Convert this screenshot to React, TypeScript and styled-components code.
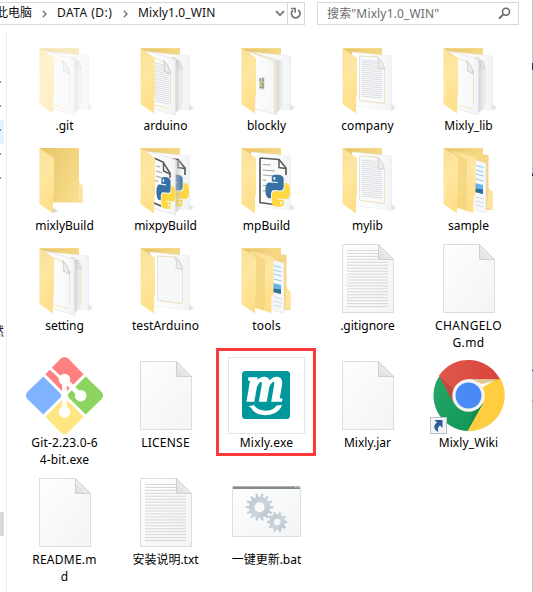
import React from "react";
import styled, { createGlobalStyle } from "styled-components";

const GlobalStyle = createGlobalStyle`
  html, body { margin: 0; padding: 0; background: #fff; overflow: hidden; }
  * { box-sizing: border-box; }
`;

const Window = styled.div`
  width: 533px;
  height: 592px;
  display: grid;
  grid-template-columns: 532px 1px;
  overflow: hidden;
  background: #fff;
  color: #111;
  font-family: "Noto Sans", "Noto Sans CJK SC", sans-serif;
  font-size: 12px;
`;
const Explorer = styled.div`
  display: flex;
  flex-direction: column;
  min-width: 0;
`;
const WindowEdge = styled.div`
  background: linear-gradient(
    #c3c3c3 63px, #15356b 63px 70px, #c3c3c3 70px 172px, #5ea3b5 172px 174px,
    #2a1522 174px 176px, #c3c3c3 176px 370px, #333 370px 371px, #c3c3c3 371px 373px,
    #b5dcd9 373px 379px, #c3c3c3 379px 400px, #b98a4c 400px 401px, #c3c3c3 401px
  );
`;

const Toolbar = styled.header`
  height: 32px;
  flex: none;
  display: flex;
  align-items: flex-start;
  gap: 12px;
  padding-top: 2px;
`;
const AddressBar = styled.nav`
  width: 305px;
  height: 23px;
  display: flex;
  border: 1px solid #d9d9d9;
  border-left: 0;
`;
const Crumbs = styled.div`
  flex: 1;
  display: flex;
  align-items: center;
  margin-left: -4px;
`;
const Crumb = styled.span<{ $width: number; $spacing?: number }>`
  width: ${(p) => p.$width}px;
  line-height: 20px;
  margin-top: -1px;
  flex: none;
  white-space: nowrap;
  letter-spacing: ${(p) => p.$spacing ?? 0}px;
`;
const Separator = styled.svg`
  width: 5px;
  height: 8px;
  margin: 1px 10px 0;
  flex: none;
  overflow: visible;
`;
const BarButton = styled.button<{ $width: number; $divided?: boolean }>`
  width: ${(p) => p.$width}px;
  padding: 0;
  border: 0;
  border-left: ${(p) => (p.$divided ? "1px solid #d9d9d9" : "0")};
  background: none;
  display: flex;
  align-items: center;
  justify-content: center;
`;
const SearchBox = styled.div`
  width: 202px;
  height: 23px;
  display: flex;
  align-items: center;
  justify-content: space-between;
  padding: 0 7px 0 9px;
  border: 1px solid #d9d9d9;
  color: #6d6d6d;
  line-height: 20px;
  letter-spacing: 0.15px;
`;

const Body = styled.div`
  flex: 1;
  display: flex;
  min-height: 0;
`;
const TreePane = styled.aside`
  width: 7px;
  flex: none;
  display: flex;
  flex-direction: column;
  border-right: 1px solid #ececec;
  padding-top: 40px;
`;
const TreeRow = styled.div<{ $selected?: boolean }>`
  width: 4px;
  height: 24px;
  display: flex;
  align-items: center;
  padding-bottom: 4px;
  background: ${(p) => (p.$selected ? "#e5f3ff" : "transparent")};
  &::before {
    content: "";
    width: 1px;
    height: 2px;
    background: #8b8b8b;
  }
`;
const TreeText = styled.div`
  width: 4px;
  height: 18px;
  margin-top: 130px;
  overflow: hidden;
  display: flex;
  justify-content: flex-end;
  color: #45143b;
  line-height: 18px;
  font-family: "Noto Sans CJK SC", sans-serif;
`;
const TreeThumb = styled.div`
  width: 4px;
  height: 24px;
  margin-top: 172px;
  background: #d9d9d9;
`;

const Files = styled.main`
  display: grid;
  grid-template-columns: repeat(5, 101px);
  grid-template-rows: 100px 100px 117px 117px 117px;
  padding: 8px 0 0 7px;
`;
const FileCell = styled.div`
  position: relative;
  display: flex;
  flex-direction: column;
  align-items: center;
`;
const Highlight = styled.div`
  position: absolute;
  left: 0;
  top: -9px;
  width: 100px;
  height: 108px;
  border: 3px solid #fb3b3b;
`;
const Label = styled.div<{ $spacing: number }>`
  line-height: 17px;
  text-align: center;
  white-space: pre;
  color: #000;
  letter-spacing: ${(p) => p.$spacing}px;
`;
const Icon = styled.svg<{ $faded?: boolean }>`
  width: 77px;
  height: 77px;
  flex: none;
  display: block;
  overflow: visible;
  opacity: ${(p) => (p.$faded ? 0.5 : 1)};
`;
const Defs = styled.svg`
  position: absolute;
  width: 0;
  height: 0;
`;

const SNAKE =
  "M14.25.18l.9.2.73.26.59.3.45.32.34.34.25.34.16.33.1.3.04.26.02.2-.01.13V8.5l-.05.63-.13.55-.21.46-.26.38-.3.31-.33.25-.35.19-.35.14-.33.1-.3.07-.26.04-.21.02H8.77l-.69.05-.59.14-.5.22-.41.27-.33.32-.27.35-.2.36-.15.37-.1.35-.07.32-.04.27-.02.21v3.06H3.17l-.21-.03-.28-.07-.32-.12-.35-.18-.36-.26-.36-.36-.35-.46-.32-.59-.28-.73-.21-.88-.14-1.05-.05-1.23.06-1.22.16-1.04.24-.87.32-.71.36-.57.4-.44.42-.33.42-.24.4-.16.36-.1.32-.05.24-.01h.16l.06.01h8.16v-.83H6.18l-.01-2.75-.02-.37.05-.34.11-.31.17-.28.25-.26.31-.23.38-.2.44-.18.51-.15.58-.12.64-.1.71-.06.77-.04.84-.02 1.27.05zm-6.3 1.98l-.23.33-.08.41.08.41.23.34.33.22.41.09.41-.09.33-.22.23-.34.08-.41-.08-.41-.23-.33-.33-.22-.41-.09-.41.09z";

function SharedDefs() {
  return (
    <Defs>
      <defs>
        <linearGradient id="flap" x1="0" y1="0" x2="0.3" y2="1">
          <stop offset="0" stopColor="#fae09a" />
          <stop offset="0.5" stopColor="#ffe7a0" />
          <stop offset="1" stopColor="#fedf8a" />
        </linearGradient>
        <linearGradient id="back" x1="0" y1="0" x2="1" y2="0.5">
          <stop offset="0" stopColor="#e6c463" />
          <stop offset="0.5" stopColor="#efd07a" />
          <stop offset="1" stopColor="#f8dc8b" />
        </linearGradient>
        <linearGradient id="page" x1="0" y1="0" x2="1" y2="0">
          <stop offset="0" stopColor="#ffffff" />
          <stop offset="0.8" stopColor="#f7f8f9" />
          <stop offset="1" stopColor="#f1f2f3" />
        </linearGradient>
        <linearGradient id="sheet" x1="0" y1="0" x2="1" y2="1">
          <stop offset="0" stopColor="#fefefe" />
          <stop offset="1" stopColor="#f2f4f6" />
        </linearGradient>
        <linearGradient id="fold" x1="0" y1="1" x2="1" y2="0">
          <stop offset="0" stopColor="#dcdddf" />
          <stop offset="0.5" stopColor="#ececed" />
          <stop offset="1" stopColor="#e2e2e4" />
        </linearGradient>
        <linearGradient id="shade" x1="0" y1="0" x2="1" y2="0">
          <stop offset="0" stopColor="#bdbdbd" stopOpacity="0.65" />
          <stop offset="1" stopColor="#cfcfcf" stopOpacity="0" />
        </linearGradient>
        <linearGradient id="gear" x1="0" y1="0" x2="1" y2="1">
          <stop offset="0" stopColor="#b9c3c9" />
          <stop offset="0.55" stopColor="#ccd6dd" />
          <stop offset="1" stopColor="#afb8be" />
        </linearGradient>
        <linearGradient id="chromeRed" x1="0" y1="0" x2="1" y2="0">
          <stop offset="0" stopColor="#e0574d" />
          <stop offset="1" stopColor="#d8453a" />
        </linearGradient>
        <linearGradient id="chromeGreen" x1="0" y1="0" x2="1" y2="1">
          <stop offset="0" stopColor="#25a768" />
          <stop offset="1" stopColor="#0f9555" />
        </linearGradient>
      </defs>
    </Defs>
  );
}

function Python({ transform }: { transform: string }) {
  return (
    <g transform={transform}>
      <path d={SNAKE} fill="#3871a3" />
      <path d={SNAKE} fill="#ffd845" transform="rotate(180 12 12)" />
    </g>
  );
}

const Flap = () => <path d="M13.5 8L28 18V54L27 57V73.5L13.5 64Z" fill="url(#flap)" />;
const BackPanel = () => (
  <>
    <path d="M13.5 8H53V30H27Z" fill="url(#back)" />
    <path d="M13.5 8.4H53" stroke="#f6dc8f" strokeWidth=".8" />
  </>
);
const BackPage = () => (
  <>
    <path d="M62 64L68.5 68L62.5 70.5Z" fill="url(#shade)" />
    <path d="M23 12L62.5 16V70L27 66Z" fill="url(#page)" stroke="#e8e8e9" strokeWidth=".5" />
  </>
);
const FrontPage = () => (
  <>
    <path d="M48.5 20H56.5V66L48.5 73Z" fill="url(#shade)" />
    <path d="M18 10.5L48.5 19.5V75L27 68.5V18Z" fill="url(#page)" stroke="#dedede" strokeWidth=".6" />
  </>
);

type Inside = "pages" | "textPages" | "drawing" | "text" | "blank" | "empty" | "python2" | "python" | "nested";

/** Slanted rows of writing inside a sheet. */
function Writing({ x1, x2, y1, y2, slant }: { x1: number; x2: number; y1: number; y2: number; slant: number }) {
  const rows = Math.floor((y2 - y1) / 2);
  return (
    <g stroke="#d3d7dc" strokeWidth=".8">
      {Array.from({ length: rows }, (_, i) => (
        <path key={i} d={`M${x1} ${y1 + i * 2}L${x2} ${y1 + i * 2 + slant}`} />
      ))}
    </g>
  );
}

function PythonSheet() {
  return (
    <>
      <path d="M32 18L51 19.5L58 28V35M32 18V62.5L46 64.5" fill="none" stroke="#5d5d5d" strokeWidth="1.7" />
      <path d="M51 19.5V27.5L58 28.5" fill="none" stroke="#5d5d5d" strokeWidth="1.5" />
      <path d="M35 24.5L43 25M35 30L47 31M35 35L46 36M35 40L38 40.3M35 45.5H38M35 51H39" stroke="#a2a2a2" strokeWidth="1.2" />
      <Python transform="translate(37.5 34) skewY(3) scale(1.02 1.34)" />
    </>
  );
}

function Folder({ inside, faded }: { inside: Inside; faded?: boolean }) {
  if (inside === "empty") {
    return (
      <Icon viewBox="0 0 77 77">
        <path d="M54 60L61.5 61L56 63Z M27 68L32 71L27 73Z" fill="url(#shade)" />
        <path d="M13.5 8H53V42L56.5 46V62.5H27Z" fill="url(#back)" />
        <path d="M53 42L56.5 46V62.5H52Z" fill="#fbe4a2" />
        <Flap />
      </Icon>
    );
  }
  if (inside === "nested") {
    return (
      <Icon viewBox="0 0 77 77">
        <BackPanel />
        <path d="M22 11L58.5 15V48L62.5 52V70L45 70V18Z" fill="#f5d684" />
        <path d="M58.5 48L62.5 52V70L57 68Z" fill="#ffe59b" />
        <path d="M45 20L56 23V73L45 70Z" fill="#f7f8fa" stroke="#dedede" strokeWidth=".5" />
        <path d="M46 25.5L53.5 27.5M46 30L53.5 32M46 34L53.5 36M46 39L53.5 41" stroke="#8acdf1" strokeWidth="1" />
        <path d="M45 43L53 45V54L45 52Z" fill="#65b5e8" />
        <path d="M45 48.5L53 49.5V54L45 52Z" fill="#2d6f90" />
        <path d="M46 57L54 59M46 61L54 63M46 65L54 67" stroke="#c6d0d6" strokeWidth=".8" />
        <path d="M22 11L45.5 17.5V54L43.5 57V73L27 68Z" fill="url(#flap)" />
        <path d="M22 11L37 20V62L36 70L27 67V18Z" fill="#edcc70" opacity=".5" />
        <Flap />
      </Icon>
    );
  }
  const two = inside === "pages" || inside === "textPages";
  return (
    <Icon viewBox="0 0 77 77" $faded={faded}>
      <BackPanel />
      <BackPage />
      {two && (
        <>
          <path d="M45 17L50 18L55 28V64" fill="none" stroke="#f3e3b8" strokeWidth=".8" />
          <path d="M45.5 17.5Q50 20 51 29L55.5 29Q53 20 45.5 17.5Z" fill="#eeeeef" stroke="#c9c9c9" strokeWidth=".6" />
          <FrontPage />
          {inside === "textPages" && <Writing x1={28} x2={42} y1={23} y2={64} slant={3} />}
          <path d="M27 18Q36 19 43.5 31V64M28 65L43 69" fill="none" stroke="#f3dfaa" strokeWidth=".8" />
          <path d="M36.5 20.5Q38.5 24 37.5 31L43.5 34Q42 25 36.5 20.5Z" fill="#ededee" stroke="#bdbdbd" strokeWidth=".7" />
        </>
      )}
      {inside === "drawing" && (
        <>
          <FrontPage />
          <path d="M18 10.5L47 21V74" fill="none" stroke="#eccf85" strokeWidth=".8" />
          <rect x="31" y="37.5" width="5.5" height="12" fill="#d6d6cc" />
          <path d="M32 38.5v2.5M35 37.8v4M33 43.5h2.6M35 44.5v4M32 47.5h1.5" stroke="#6b6d62" strokeWidth="1" />
          <path d="M32.4 41.5h1.6v5h-1.6z" fill="#bdbf55" />
        </>
      )}
      {(inside === "text" || inside === "blank") && (
        <>
          <path
            d="M30.5 16L49 17Q54 22 55.5 29V63.5L30.5 60.5Z"
            fill={inside === "blank" ? "#f7f8fa" : "#fafafa"}
            stroke="#dadada"
            strokeWidth=".7"
          />
          {inside === "text" && <Writing x1={32.5} x2={53} y1={20} y2={59} slant={2} />}
          <path d="M48 17Q51 22 49 28L55.5 29.5Q54 21 48 17Z" fill="#ededee" stroke="#c5c5c5" strokeWidth=".7" />
          <path d="M30.5 16L49 17M55.5 44V63.5L31 60.5" fill="none" stroke="#f4e2b2" strokeWidth=".7" />
        </>
      )}
      {inside === "python" && <PythonSheet />}
      {inside === "python2" && (
        <>
          <PythonSheet />
          <FrontPage />
          <path d="M27 18L36 22L43 33V38M27 63L34 66" fill="none" stroke="#555" strokeWidth="1.5" />
          <path d="M36.5 22V31L43 34" fill="none" stroke="#555" strokeWidth="1.4" />
          <path d="M29 26L33 27M29 31L35 33M29 36L35 38M28 41H31" stroke="#a2a2a2" strokeWidth="1.1" />
          <Python transform="translate(29.5 36) skewY(7) scale(.79 1.32)" />
        </>
      )}
      <Flap />
    </Icon>
  );
}

function Sheet({ lined }: { lined?: boolean }) {
  return (
    <Icon viewBox="0 0 77 77">
      <path d="M13.5 4.5H49.5L64.5 19.5V72.5H13.5Z" fill="url(#sheet)" stroke="#dcddde" />
      {lined && (
        <g stroke="#d6d7d9" strokeWidth="1">
          {Array.from({ length: 20 }, (_, i) => (
            <path key={i} d={`M18 ${10.5 + i * 2.95}H${i < 4 ? 49 : 59}`} />
          ))}
        </g>
      )}
      <path d="M49.5 4.5V19.5H64.5Z" fill="url(#fold)" stroke="#cfd0d1" />
    </Icon>
  );
}

/** One rounded tile of the diamond, drawn for the left corner and turned into place. */
const TILE = "M17.3 19.4L34.2 36.2Q36.2 38.5 34.2 40.8L17.3 57.6L1.6 42.2Q-1.8 38.5 1.6 34.8Z";

function GitIcon() {
  return (
    <Icon viewBox="0 0 77 77">
      <path d={TILE} fill="#80b3ff" />
      <path d={TILE} fill="#ff8080" transform="rotate(90 38.5 38.5)" />
      <path d={TILE} fill="#8dd35f" transform="rotate(180 38.5 38.5)" />
      <path d={TILE} fill="#ffe680" transform="rotate(270 38.5 38.5)" />
      <g fill="none" stroke="#fff">
        <path d="M22.5 9.5L38.5 24.5" strokeWidth="3" />
        <path d="M38.5 22.5V54M38.5 22.5L54.5 38.5" strokeWidth="4.8" />
      </g>
      <g fill="#fff">
        <circle cx="38.5" cy="22.5" r="5.8" />
        <circle cx="38.5" cy="55" r="5.8" />
        <circle cx="54.7" cy="38.7" r="5.8" />
      </g>
    </Icon>
  );
}

const LogoLetter = styled.text`
  font: italic bold 50px "Liberation Serif", serif;
  fill: #fff;
  stroke: #fff;
  stroke-width: 1.6px;
`;

function MixlyIcon() {
  return (
    <Icon viewBox="0 0 77 77">
      <rect x=".5" y=".5" width="76" height="76" fill="#fff" stroke="#e5e5e5" />
      <rect x="14" y="14" width="48" height="48" rx="3.5" fill="#00979c" />
      <LogoLetter transform="translate(18.5 43.5) scale(.96 1.02)">m</LogoLetter>
      <path d="M20.5 49.5L26 48C30 55 44 56 48.5 48.5L54 48C50 61 27 61 23.5 51Z" fill="#fff" />
    </Icon>
  );
}

function ChromeIcon() {
  return (
    <Icon viewBox="0 0 77 77">
      <path d="M38.5 38.5L69.7 20.3A35.5 35.5 0 0 1 37.5 74L52 46.5Z" fill="#ffcd40" />
      <path d="M38.5 38.5L9 19.5A35.5 35.5 0 0 0 37.5 74L53 46.5Z" fill="url(#chromeGreen)" />
      <path d="M38.5 38.5L22.5 44L9 18.5A35.5 35.5 0 0 1 70 22.3H38.5Z" fill="url(#chromeRed)" />
      <path d="M9 18.5L22.5 44L25 34Z" fill="#a5382f" opacity=".45" />
      <path d="M40 22.3H69.7L52 27Z" fill="#b98416" opacity=".45" />
      <path d="M37.5 74L53 46.5L44 53Z" fill="#0a6b3d" opacity=".3" />
      <circle cx="38.5" cy="38.5" r="16.2" fill="#f3f3f3" />
      <circle cx="38.5" cy="38.5" r="13" fill="#4a8af4" />
      <rect x=".5" y="60.5" width="16" height="16" fill="#f4f5f7" stroke="#bfc0c2" />
      <path d="M4.5 63H12.5V71L10 68.5C7.5 70.5 7.5 72 8.5 75C4 73 2.5 69 7 65.5Z" fill="#2c5f9e" />
    </Icon>
  );
}

function Gear({ cx, cy, r, hole, teeth }: { cx: number; cy: number; r: number; hole: number; teeth: number }) {
  const root = r * 0.77;
  const points = Array.from({ length: teeth }, (_, i) => {
    const step = (Math.PI * 2) / teeth;
    return ([[-0.28, root], [-0.17, r], [0.17, r], [0.28, root]] as const).map(
      ([offset, radius]) => `${cx + radius * Math.cos((i + offset) * step)} ${cy + radius * Math.sin((i + offset) * step)}`
    );
  }).flat();
  const ring = `M${cx - hole} ${cy}a${hole} ${hole} 0 1 0 ${hole * 2} 0a${hole} ${hole} 0 1 0 ${-hole * 2} 0Z`;
  return <path fillRule="evenodd" d={`M${points.join("L")}Z${ring}`} fill="url(#gear)" />;
}

function BatchIcon() {
  return (
    <Icon viewBox="0 0 77 77">
      <rect x="4.5" y="12.5" width="68" height="50" fill="url(#sheet)" stroke="#dedfe0" />
      <path d="M5 12.5H72V15H5Z" fill="#838a8f" />
      <path d="M67 13.2h1M69 13.2h1M71 13.2h1" stroke="#dfe3e5" />
      <Gear cx={31.5} cy={33.2} r={13.7} hole={5} teeth={14} />
      <Gear cx={49.2} cy={48} r={10.2} hole={3.2} teeth={10} />
    </Icon>
  );
}

type FileItem = { name: string; icon: React.ReactNode; spacing?: number; marked?: boolean };

const files: FileItem[] = [
  { name: ".git", icon: <Folder inside="pages" faded /> },
  { name: "arduino", icon: <Folder inside="textPages" /> },
  { name: "blockly", icon: <Folder inside="drawing" /> },
  { name: "company", icon: <Folder inside="text" />, spacing: 0.1 },
  { name: "Mixly_lib", icon: <Folder inside="pages" /> },
  { name: "mixlyBuild", icon: <Folder inside="empty" /> },
  { name: "mixpyBuild", icon: <Folder inside="python2" /> },
  { name: "mpBuild", icon: <Folder inside="python" /> },
  { name: "mylib", icon: <Folder inside="text" /> },
  { name: "sample", icon: <Folder inside="nested" /> },
  { name: "setting", icon: <Folder inside="pages" />, spacing: -0.1 },
  { name: "testArduino", icon: <Folder inside="blank" />, spacing: 0.1 },
  { name: "tools", icon: <Folder inside="nested" />, spacing: 0.2 },
  { name: ".gitignore", icon: <Sheet lined /> },
  { name: "CHANGELO\nG.md", icon: <Sheet />, spacing: 0.35 },
  { name: "Git-2.23.0-6\n4-bit.exe", icon: <GitIcon />, spacing: 0.15 },
  { name: "LICENSE", icon: <Sheet />, spacing: 0.25 },
  { name: "Mixly.exe", icon: <MixlyIcon />, spacing: 0.2, marked: true },
  { name: "Mixly.jar", icon: <Sheet /> },
  { name: "Mixly_Wiki", icon: <ChromeIcon />, spacing: 0.1 },
  { name: "README.m\nd", icon: <Sheet />, spacing: 0.25 },
  { name: "安装说明.txt", icon: <Sheet lined /> },
  { name: "一键更新.bat", icon: <BatchIcon /> },
];

const CrumbArrow = () => (
  <Separator viewBox="0 0 5 8">
    <path d="M.8.8L4 4L.8 7.2" fill="none" stroke="#777" strokeWidth="1.4" />
  </Separator>
);

export default function App() {
  return (
    <>
      <GlobalStyle />
      <SharedDefs />
      <Window>
        <Explorer>
          <Toolbar>
            <AddressBar>
              <Crumbs>
                <Crumb $width={36}>此电脑</Crumb>
                <CrumbArrow />
                <Crumb $width={56} $spacing={0.45}>DATA (D:)</Crumb>
                <CrumbArrow />
                <Crumb $width={80} $spacing={0.1}>Mixly1.0_WIN</Crumb>
              </Crumbs>
              <BarButton $width={15} aria-label="Recent locations">
                <svg width="10" height="7" viewBox="0 0 10 7">
                  <path d="M1 1.2L5 5.2L9 1.2" fill="none" stroke="#777" strokeWidth="1.8" />
                </svg>
              </BarButton>
              <BarButton $width={17} $divided aria-label="Refresh">
                <svg width="12" height="13" viewBox="0 0 12 13">
                  <path d="M3 3.2A4.3 4.3 0 1 0 8.2 3" fill="none" stroke="#777" strokeWidth="1.8" />
                  <path d="M1 1.5H5.2V5.7" fill="none" stroke="#777" strokeWidth="1.6" />
                </svg>
              </BarButton>
            </AddressBar>
            <SearchBox>
              <span>搜索"Mixly1.0_WIN"</span>
              <svg width="13" height="13" viewBox="0 0 13 13">
                <circle cx="8" cy="4.8" r="3.5" fill="none" stroke="#666" strokeWidth="1.5" />
                <path d="M5.4 7.4L1 11.6" stroke="#666" strokeWidth="2" />
              </svg>
            </SearchBox>
          </Toolbar>
          <Body>
            <TreePane>
              <TreeRow />
              <TreeRow />
              <TreeRow $selected />
              <TreeRow />
              <TreeRow />
              <TreeText>然</TreeText>
              <TreeThumb />
            </TreePane>
            <Files>
              {files.map((file) => (
                <FileCell key={file.name}>
                  {file.icon}
                  <Label $spacing={file.spacing ?? 0}>{file.name}</Label>
                  {file.marked && <Highlight />}
                </FileCell>
              ))}
            </Files>
          </Body>
        </Explorer>
        <WindowEdge />
      </Window>
    </>
  );
}
